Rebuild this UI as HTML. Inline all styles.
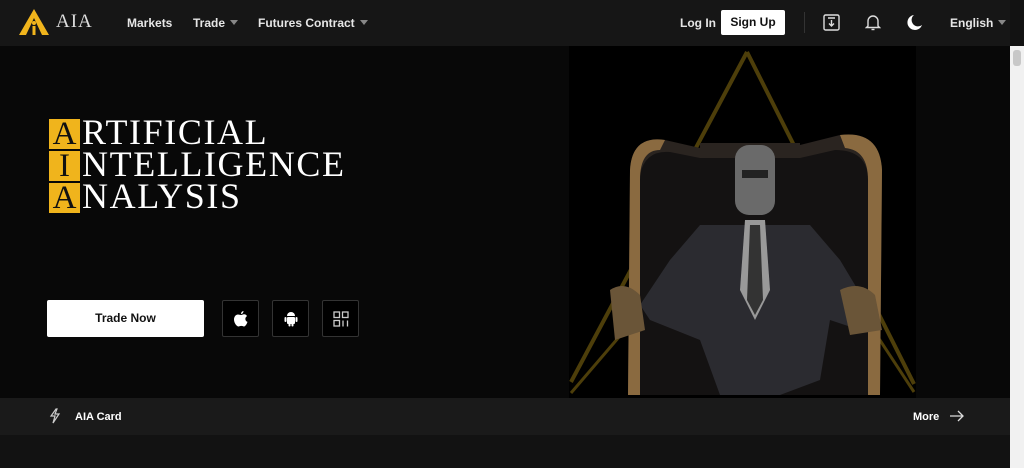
<!DOCTYPE html>
<html><head><style>
*{margin:0;padding:0;box-sizing:border-box}
body{width:1024px;height:468px;overflow:hidden;background:#121212;font-family:"Liberation Sans",sans-serif;position:relative}
.nav{position:absolute;left:0;top:0;width:1010px;height:46px;background:#161616;color:#e6e6e6;font-weight:bold;font-size:12px}
.nav span{position:absolute;top:16px}
.caret{display:inline-block;width:0;height:0;border-left:4px solid transparent;border-right:4px solid transparent;border-top:5px solid #888;margin-left:5px;vertical-align:2px}
.hero{position:absolute;left:0;top:46px;width:1010px;height:352px;background:#080808;overflow:hidden}
.bar{position:absolute;left:0;top:398px;width:1010px;height:37px;background:#1a1a1a;color:#fff;font-weight:bold;font-size:11px}
.scroll{position:absolute;left:1010px;top:46px;width:14px;height:422px;background:#f1f1f1}
.title{position:absolute;left:49px;font-family:"Liberation Serif",serif;color:#fff;font-size:36px;line-height:31px;letter-spacing:1.6px;white-space:nowrap}
.title b{display:inline-block;width:31px;height:30px;background:#f0b41c;color:#111;font-weight:normal;text-align:center;margin-right:2px;font-size:33px;letter-spacing:0}
.ibtn{position:absolute;top:300px;width:37px;height:37px;border:1px solid #333;background:#000;border-radius:2px}
</style></head><body>
<div class="nav">
<svg style="position:absolute;left:18px;top:8px" width="32" height="28" viewBox="0 0 32 28"><path d="M16 1 L31 27 L24 27 L16 10 L8 27 L1 27 Z" fill="#f0b41c"/><circle cx="16" cy="15" r="2" fill="#f0b41c"/><rect x="14.5" y="18" width="3" height="9" fill="#f0b41c"/></svg>
<span style="left:56px;top:11px;font-family:'Liberation Serif',serif;font-weight:normal;font-size:19px;color:#ddd;letter-spacing:1px">AIA</span>
<span style="left:127px">Markets</span>
<span style="left:193px">Trade<i class="caret"></i></span>
<span style="left:258px">Futures Contract<i class="caret"></i></span>
<span style="left:680px">Log In</span>
<div style="position:absolute;left:721px;top:10px;width:64px;height:25px;background:#fff;color:#111;text-align:center;line-height:25px;border-radius:2px">Sign Up</div>
<div style="position:absolute;left:804px;top:12px;width:1px;height:21px;background:#333"></div>
<svg style="position:absolute;left:823px;top:14px" width="17" height="17" viewBox="0 0 17 17" fill="none" stroke="#ddd" stroke-width="1.4"><rect x="1" y="1" width="15" height="15" rx="1.5"/><path d="M5 4h7M8.5 6v6M6 9.5l2.5 2.5 2.5-2.5"/></svg>
<svg style="position:absolute;left:865px;top:14px" width="16" height="17" viewBox="0 0 16 17" fill="none" stroke="#ddd" stroke-width="1.4"><path d="M3 12V7a5 5 0 0 1 10 0v5l1.5 1.5h-13z"/><path d="M6.5 15.5h3"/></svg>
<svg style="position:absolute;left:907px;top:14px" width="16" height="17" viewBox="0 0 16 17"><path d="M7 1a7.5 7.5 0 1 0 8 10A6 6 0 0 1 7 1z" fill="#fff"/></svg>
<span style="left:950px">English<i class="caret"></i></span>
</div>
<div class="hero">
<svg style="position:absolute;left:430px;top:0" width="580" height="352" viewBox="430 46 580 352">
<rect x="569" y="46" width="347" height="352" fill="#000"/>
<path d="M747 52 L571 382 M747 52 L914 384" stroke="#4d3e0a" stroke-width="4" fill="none"/>
<path d="M571 393 L625 330 M870 325 L914 392" stroke="#4d3e0a" stroke-width="3" fill="none"/>
<path d="M628 395 L630 170 Q632 135 665 140 L700 148 L700 143 L800 143 L800 145 L840 135 Q880 130 882 170 L880 395 Z" fill="#2a2420"/>
<path d="M640 395 L640 175 Q645 150 670 152 L700 158 L800 158 L835 150 Q868 150 868 180 L868 395 Z" fill="#141212"/>
<path d="M630 170 Q632 135 665 140 L660 150 Q640 150 640 180 L640 395 L628 395 Z" fill="#8a6a40"/>
<path d="M882 170 Q880 130 840 135 L845 148 Q868 150 868 180 L868 395 L880 395 Z" fill="#8a6a40"/>
<rect x="735" y="145" width="40" height="70" rx="14" fill="#6a6a6a"/>
<rect x="742" y="170" width="26" height="8" fill="#222"/>
<path d="M700 225 L810 225 L840 260 L870 310 L860 330 L830 320 L820 380 L780 395 L720 395 L700 340 L650 320 L640 305 L670 260 Z" fill="#2b2b30"/>
<path d="M745 220 L765 220 L770 290 L755 320 L740 290 Z" fill="#999"/>
<path d="M750 225 L760 225 L763 300 L755 315 L747 300 Z" fill="#333"/>
<path d="M610 290 Q625 280 640 295 L645 330 L615 340 Z" fill="#6a5538"/>
<path d="M840 290 Q860 280 875 295 L882 330 L850 335 Z" fill="#6a5538"/>
</svg>
<div class="title" style="top:71px"><b>A</b>RTIFICIAL</div>
<div class="title" style="top:103px"><b>I</b>NTELLIGENCE</div>
<div class="title" style="top:135px"><b>A</b>NALYSIS</div>
<div style="position:absolute;left:47px;top:254px;width:157px;height:37px;background:#fff;border-radius:2px;text-align:center;line-height:37px;font-weight:bold;font-size:12px;color:#111">Trade Now</div>
<div class="ibtn" style="left:222px;top:254px"><svg style="position:absolute;left:11px;top:10px" width="14" height="16" viewBox="0 0 14 16"><path d="M9.5 0c0 1.5-1 3-2.5 3 0-1.5 1-2.8 2.5-3zM7 4c1 0 2-.7 3-.7 1.5 0 2.5.8 3 1.8-2.5 1.300-2 5 .5 5.8-.7 2-2 4.600-3.500 4.600-1 0-1.300-.6-2.700-.6s-1.800.6-2.800.6C2.800 15.500 0 12 0 8.500 0 5.500 2 3.500 4 3.500c1 0 2 .5 3 .5z" fill="#fff"/></svg></div>
<div class="ibtn" style="left:272px;top:254px"><svg style="position:absolute;left:11px;top:10px" width="14" height="16" viewBox="0 0 14 16" fill="#fff"><path d="M3 5a4 4 0 0 1 8 0z"/><rect x="3" y="6" width="8" height="7" rx="1"/><rect x="0.5" y="6" width="2" height="5" rx="1"/><rect x="11.5" y="6" width="2" height="5" rx="1"/><rect x="4.5" y="12" width="2" height="3.5" rx="1"/><rect x="7.5" y="12" width="2" height="3.5" rx="1"/></svg></div>
<div class="ibtn" style="left:322px;top:254px"><svg style="position:absolute;left:10px;top:10px" width="16" height="16" viewBox="0 0 16 16" fill="none" stroke="#ccc" stroke-width="1.3"><rect x="1" y="1" width="5.5" height="5.5"/><rect x="9.5" y="1" width="5.5" height="5.5"/><rect x="1" y="9.5" width="5.5" height="5.5"/><path d="M10 9.5v6M14.5 9.5v6"/></svg></div>
</div>
<div class="bar">
<svg style="position:absolute;left:49px;top:10px" width="12" height="16" viewBox="0 0 12 16" fill="none" stroke="#ccc" stroke-width="1.2"><path d="M7 1L2 8h4l-2 7 6-9H6l2-5z"/></svg>
<span style="position:absolute;left:75px;top:13px">AIA Card</span>
<span style="position:absolute;left:913px;top:13px">More</span>
<svg style="position:absolute;left:949px;top:12px" width="16" height="12" viewBox="0 0 16 12" fill="none" stroke="#ddd" stroke-width="1.3"><path d="M1 6h13M9 1l5 5-5 5"/></svg>
</div>
<div class="scroll"><div style="position:absolute;left:3px;top:4px;width:8px;height:16px;background:#c8c8c8;border-radius:3px"></div></div>
</body></html>
